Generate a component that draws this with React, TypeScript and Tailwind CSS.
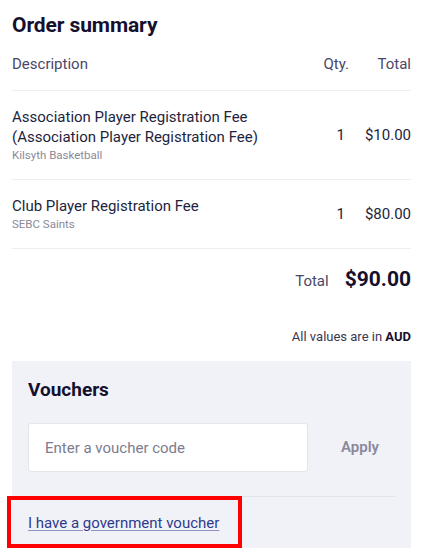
import React from 'react';

interface LineItem {
  name: string[];
  org: string;
  qty: number;
  total: string;
}

const items: LineItem[] = [
  {
    name: ['Association Player Registration Fee', '(Association Player Registration Fee)'],
    org: 'Kilsyth Basketball',
    qty: 1,
    total: '$10.00',
  },
  {
    name: ['Club Player Registration Fee'],
    org: 'SEBC Saints',
    qty: 1,
    total: '$80.00',
  },
];

export default function App() {
  return (
    <div className="relative w-[423px] h-[558px] overflow-hidden bg-white font-['Roboto',sans-serif] text-[#231f3d]">
      <div className="px-3">
        <h2 className="pt-[11px] text-[21px] leading-[28px] font-bold tracking-[-0.1px] text-[#14102e]">
          Order summary
        </h2>

        <div className="flex items-center h-[52px] text-[15px] text-[#4a4866] border-b border-[#efeff2]">
          <span className="flex-1">Description</span>
          <span className="w-[40px] text-right">Qty.</span>
          <span className="w-[62px] text-right">Total</span>
        </div>

        {items.map((item) => (
          <div key={item.org} className="flex items-center py-[16px] border-b border-[#efeff2]">
            <div className="flex-1">
              {item.name.map((line) => (
                <div key={line} className="text-[15px] leading-[20px] text-[#231f3d]">
                  {line}
                </div>
              ))}
              <div className="text-[11.5px] leading-[16px] text-[#8b8a99]">{item.org}</div>
            </div>
            <span className="w-[40px] pr-[4px] text-right text-[15px] text-[#231f3d]">{item.qty}</span>
            <span className="w-[62px] text-right text-[15px] text-[#231f3d]">{item.total}</span>
          </div>
        ))}

        <div className="flex items-center justify-end gap-[16px] h-[62px]">
          <span className="text-[15px] text-[#4a4866] pt-[3px]">Total</span>
          <span className="text-[21px] font-bold text-[#14102e]">$90.00</span>
        </div>

        <div className="h-[50px] pt-[16px] text-right text-[13px] text-[#3a3850]">
          All values are in <span className="font-bold text-[#14102e]">AUD</span>
        </div>

        <div className="bg-[#f0f2f7] h-[187px]">
          <h3 className="px-4 pt-[17px] text-[19px] leading-[24px] font-bold text-[#14102e]">Vouchers</h3>
          <div className="flex items-center px-4 pt-[21px]">
            <input
              placeholder="Enter a voucher code"
              className="w-[280px] h-[49px] px-4 rounded-[3px] bg-white border border-[#e4e6ec] text-[15px] text-[#231f3d] placeholder:text-[#7d7c8e] outline-none"
            />
            <button className="ml-[33px] text-[15px] font-semibold text-[#8a899c]">Apply</button>
          </div>
          <div className="mt-[24px] mr-4 border-t border-[#e2e4ea] px-4 pt-[14px]">
            <a href="#" className="text-[15px] text-[#2f3a8c] underline decoration-[#8d93c4] underline-offset-2">
              I have a government voucher
            </a>
          </div>
        </div>
      </div>

      <div className="absolute left-[7px] top-[496px] w-[235px] h-[52px] border-4 border-[#ff0000] pointer-events-none" />
    </div>
  );
}
